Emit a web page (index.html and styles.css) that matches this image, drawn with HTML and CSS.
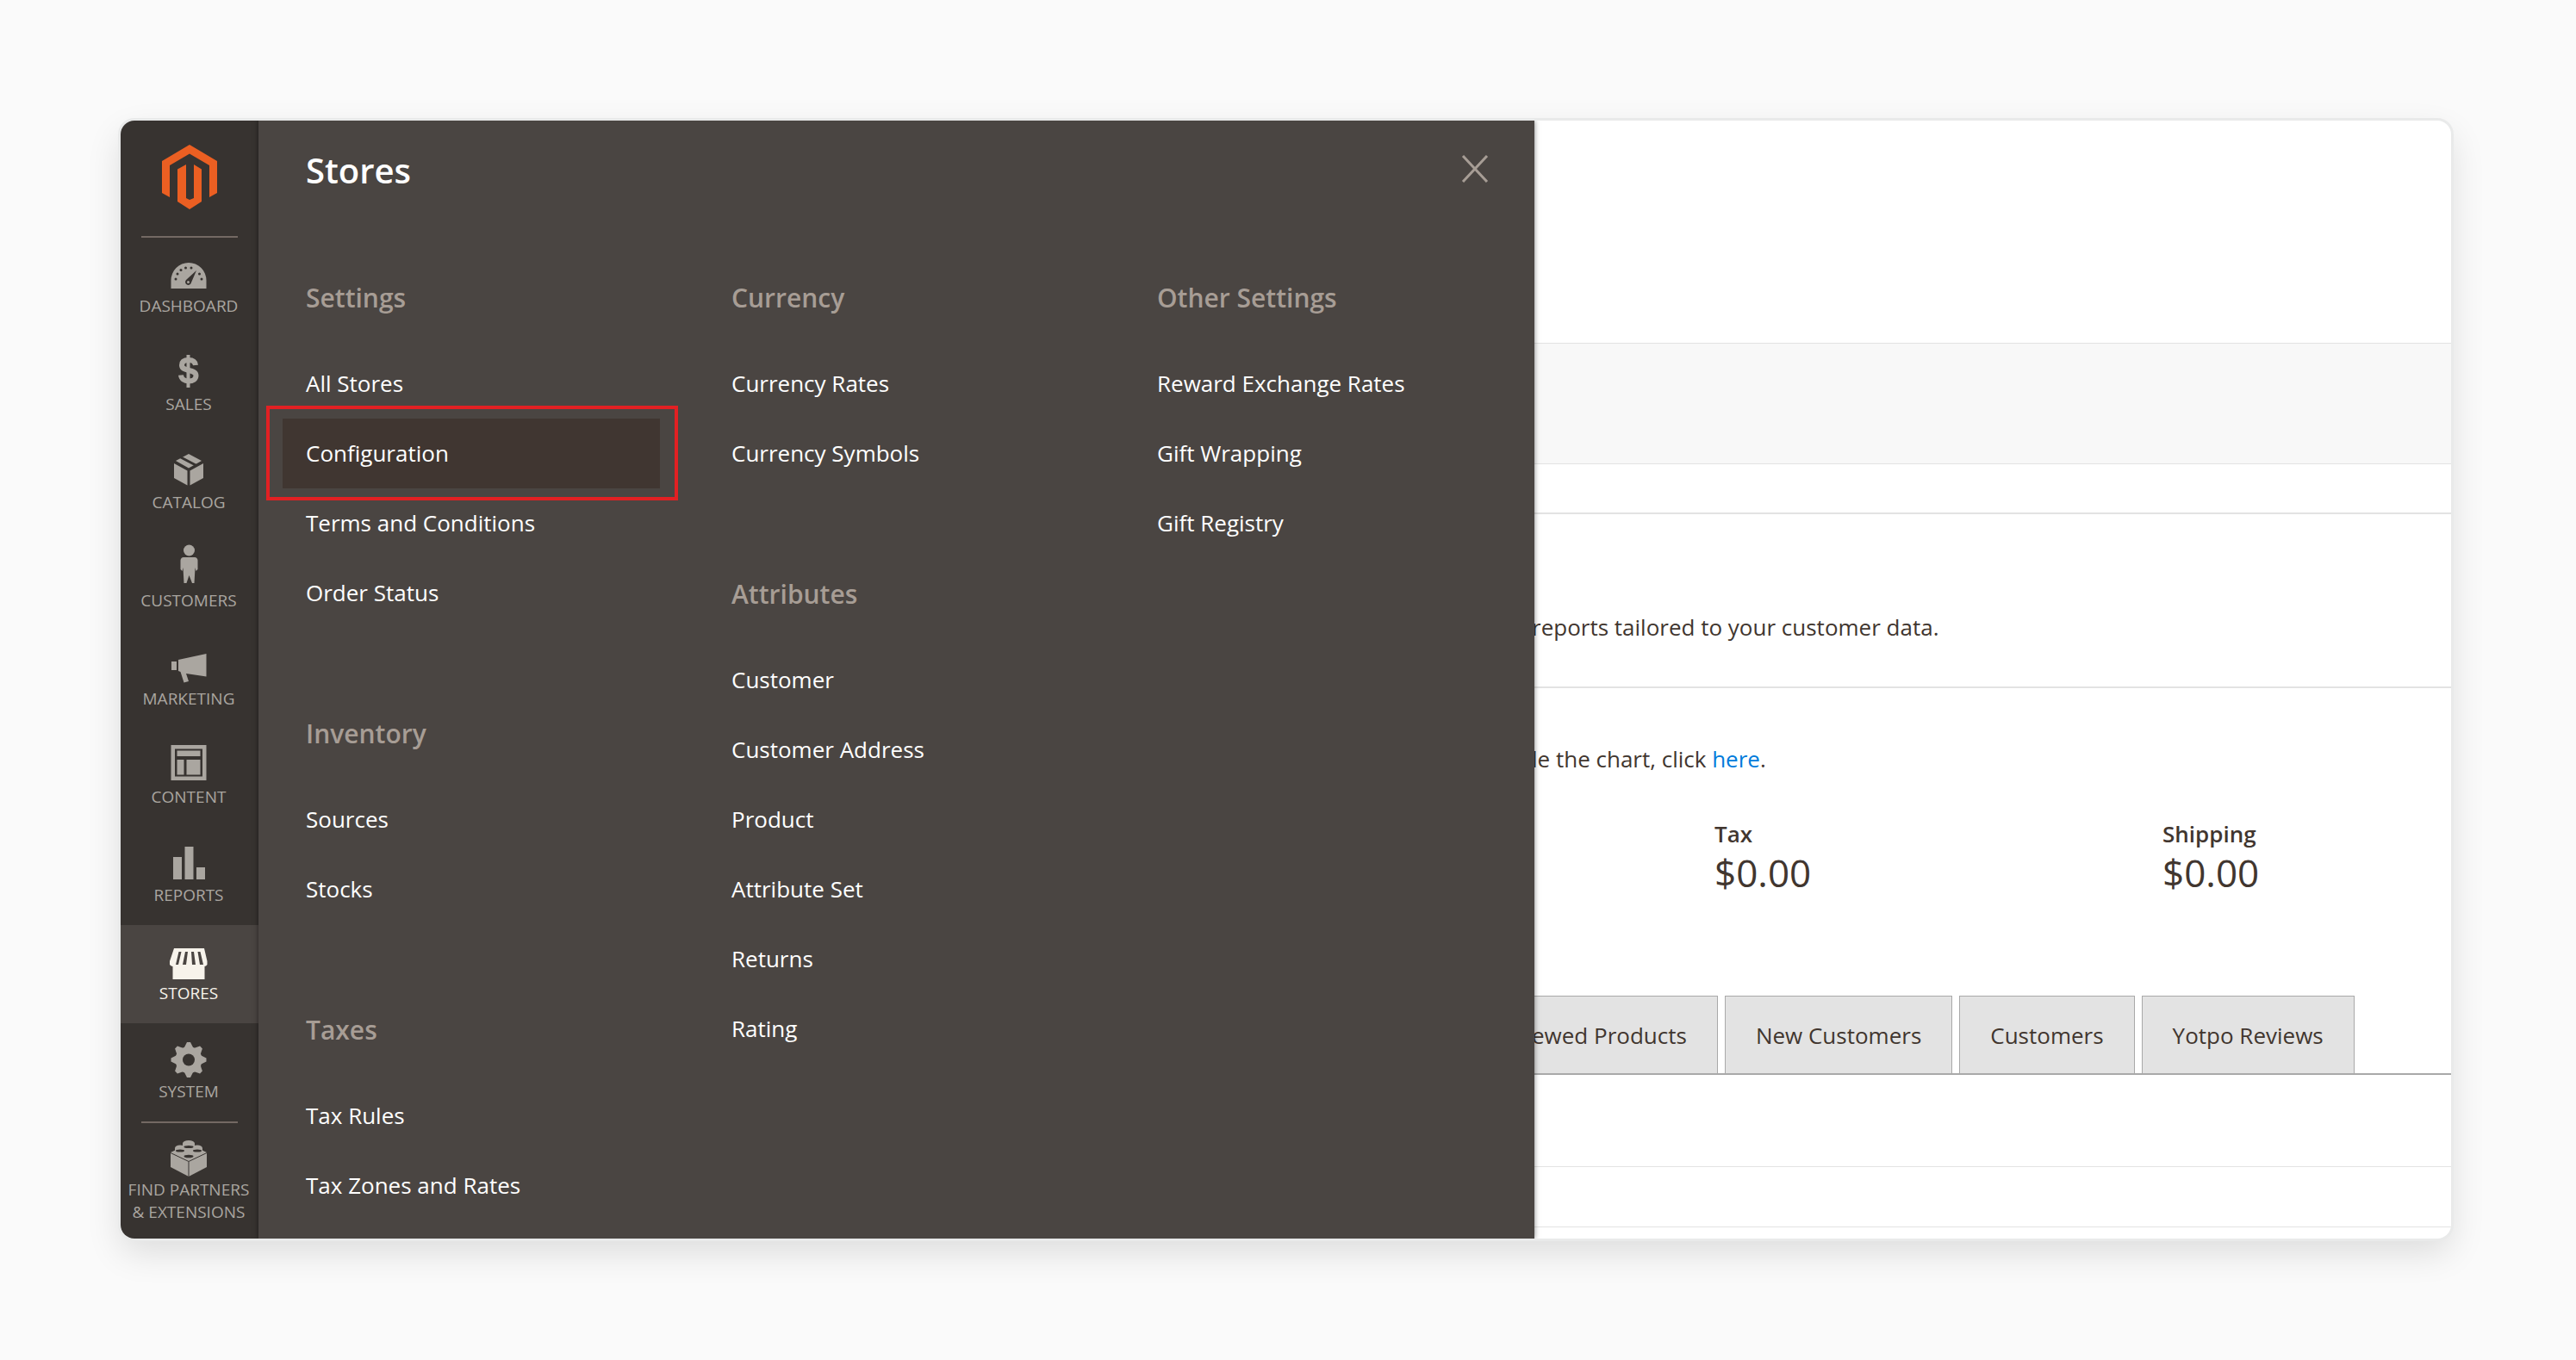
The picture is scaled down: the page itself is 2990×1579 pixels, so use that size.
FILE: index.html
```html
<!DOCTYPE html>
<html lang="en">
<head>
<meta charset="utf-8">
<title>Stores</title>
<link rel="stylesheet" href="styles.css">
</head>
<body>
<div class="window">
  <nav class="sidebar">
    <a class="logo" href="#">
      <svg width="64" height="76" viewBox="0 0 64 76"><path d="M32 0 64 19V56L55 61V24L32 10.500 9 24V61L0 56V19Z"/><path d="M28 23V62L32 64 37 62V23L46 28.500V66L32 75 18 66V28.500Z"/></svg>
    </a>
    <a class="item" href="#">
      <svg class="icon" viewBox="0 0 48 48"><path d="M3.500 43V33.500a20.500 20.500 0 0 1 41 0V43Z"/><g class="cut"><path d="M33 22 27 36a3.500 3.500 0 1 1-6-3Z"/><circle cx="9" cy="32" r="1.500"/><circle cx="11" cy="26" r="1.500"/><circle cx="15" cy="21.500" r="1.500"/><circle cx="20.500" cy="19" r="1.500"/><circle cx="27" cy="19" r="1.500"/><circle cx="36.500" cy="26" r="1.500"/><circle cx="39" cy="32" r="1.500"/></g><circle cx="23.500" cy="35.500" r="1.500"/></svg>
      <span>DASHBOARD</span>
    </a>
    <a class="item" href="#">
      <svg class="icon" viewBox="0 0 48 48"><path class="line dollar" d="M32 18c-.5-4-3.500-6-8-6-5 0-8 2-8 6 0 8 16.500 4 16.500 12 0 4-3.500 6.500-8.500 6.500s-8.500-2.500-9-7"/><path class="line thin" d="M23.500 6v38"/></svg>
      <span>SALES</span>
    </a>
    <a class="item" href="#">
      <svg class="icon" viewBox="0 0 48 48"><path d="M7 18 22.500 26.500V43.500L7 35ZM41 18 25.500 26.500V43.500L41 35ZM24 7 39 15 24 23.500 9 15Z"/><path class="gap" d="M14 10.500 33 20.500"/></svg>
      <span>CATALOG</span>
    </a>
    <a class="item" href="#">
      <svg class="icon" viewBox="0 0 48 48"><circle cx="24.500" cy="5" r="6.500"/><path d="M18 13h13q3 0 3.500 3.500V27l-2 2-1-4-1 18H28l-3.500-9-3 9h-3l-1-18-1 4-2-2V16.500Q15 13 18 13Z"/></svg>
      <span>CUSTOMERS</span>
    </a>
    <a class="item" href="#">
      <svg class="icon" viewBox="0 0 48 48"><path d="M4 20h6v10H4ZM12 18 44.500 11V37.500L21 34l3 9-5.500 1.500L14.500 32 12 31Z"/></svg>
      <span>MARKETING</span>
    </a>
    <a class="item" href="#">
      <svg class="icon" viewBox="0 0 48 48"><path fill-rule="evenodd" d="M3.500 3h41v41h-41ZM8 7.500v32h32v-32Z"/><path d="M10.500 9.500h27v6.500h-27ZM10.500 20h8v17.500h-8ZM21.500 20h16v17.500h-16Z"/></svg>
      <span>CONTENT</span>
    </a>
    <a class="item" href="#">
      <svg class="icon" viewBox="0 0 48 48"><path d="M6 19h10v26H6ZM19.500 7h10v38h-10ZM33 31h10v14H33Z"/></svg>
      <span>REPORTS</span>
    </a>
    <a class="item active" href="#">
      <svg class="icon" viewBox="0 0 48 48"><path d="M7 11h35l3.500 15v4q-1.500 2-3 2v15H5.500V32q-2 0-3.500-2v-4Z"/><g class="cut"><path d="M12.500 15h3L12 30H9ZM20 15h3L21 30h-4ZM27 15h3l2 15h-4ZM34.500 15h3L41 30h-4Z"/></g></svg>
      <span>STORES</span>
    </a>
    <a class="item" href="#">
      <svg class="icon" viewBox="0 0 48 48"><g><circle cx="24" cy="26.500" r="15.500"/><path id="tooth" d="M19 12 22 6h4L29 12v29l-3 6h-4L19 41Z"/><use href="#tooth" transform="rotate(45 24 26.500)"/><use href="#tooth" transform="rotate(90 24 26.500)"/><use href="#tooth" transform="rotate(135 24 26.500)"/></g><circle class="cut" cx="24" cy="26.500" r="7"/></svg>
      <span>SYSTEM</span>
    </a>
    <a class="item partners" href="#">
      <svg class="icon" viewBox="0 0 48 48"><path d="M3 20 24 10 45 20V37L24 48 3 37Z"/><path d="M17 9.500a7 3.500 0 0 1 14 0V15H17ZM8 15a6 3.500 0 0 1 12 0v4H8ZM28 15a6 3.500 0 0 1 12 0v4H28Z"/><g class="cut"><ellipse cx="24" cy="13.500" rx="5.500" ry="1.500"/><ellipse cx="14" cy="18" rx="5" ry="1.500"/><ellipse cx="34" cy="18" rx="5" ry="1.500"/><ellipse cx="24" cy="24.500" rx="5.500" ry="1.800"/></g><path class="seam" d="M3 20.500 24 30.500 45 20.500M24 31V48"/></svg>
      <span>FIND PARTNERS<br>&amp; EXTENSIONS</span>
    </a>
  </nav>

  <section class="flyout">
    <header class="flyout-head">
      <h1>Stores</h1>
      <button class="close" type="button" aria-label="Close"><svg width="32" height="32" viewBox="0 0 32 32"><path d="M2 1 30 31M30 1 2 31"/></svg></button>
    </header>
    <div class="columns">
      <div class="column">
        <div class="group">
          <h2>Settings</h2>
          <a href="#">All Stores</a>
          <a class="current" href="#">Configuration</a>
          <a href="#">Terms and Conditions</a>
          <a href="#">Order Status</a>
        </div>
        <div class="group">
          <h2>Inventory</h2>
          <a href="#">Sources</a>
          <a href="#">Stocks</a>
        </div>
        <div class="group">
          <h2>Taxes</h2>
          <a href="#">Tax Rules</a>
          <a href="#">Tax Zones and Rates</a>
        </div>
      </div>
      <div class="column">
        <div class="group">
          <h2>Currency</h2>
          <a href="#">Currency Rates</a>
          <a href="#">Currency Symbols</a>
        </div>
        <div class="group">
          <h2>Attributes</h2>
          <a href="#">Customer</a>
          <a href="#">Customer Address</a>
          <a href="#">Product</a>
          <a href="#">Attribute Set</a>
          <a href="#">Returns</a>
          <a href="#">Rating</a>
        </div>
      </div>
      <div class="column">
        <div class="group">
          <h2>Other Settings</h2>
          <a href="#">Reward Exchange Rates</a>
          <a href="#">Gift Wrapping</a>
          <a href="#">Gift Registry</a>
        </div>
      </div>
    </div>
  </section>

  <main class="page">
    <div class="toolbar"></div>
    <div class="spacer"></div>
    <p class="intro">reports tailored to your customer data.</p>
    <p class="note">le the chart, click <a href="#">here</a>.</p>
    <dl class="totals">
      <div><dt>Tax</dt><dd>$0.00</dd></div>
      <div><dt>Shipping</dt><dd>$0.00</dd></div>
    </dl>
    <div class="tabs">
      <button type="button">ewed Products</button>
      <button type="button">New Customers</button>
      <button type="button">Customers</button>
      <button type="button">Yotpo Reviews</button>
    </div>
    <div class="row first"></div>
    <div class="row"></div>
  </main>
</div>
</body>
</html>
```
FILE: styles.css
```css
* {
  box-sizing: border-box;
}

body {
  margin: 0;
  padding: 140px 145px 140px 140px;
  background: #fafafa;
  color: #41362f;
  font-family: "Open Sans", "Noto Sans", sans-serif;
  font-size: 26px;
}

a {
  color: inherit;
  text-decoration: none;
}

h1, h2, p, dl, dd {
  margin: 0;
}

.window {
  display: flex;
  overflow: hidden;
  border-radius: 16px;
  background: #fff;
  box-shadow: 0 0 0 3px #e9eaea, 0 16px 40px rgba(0, 0, 0, 0.12);
}

/* Sidebar */
.sidebar {
  flex: none;
  width: 160px;
  background: #373330;
  color: #aaa6a0;
  font-size: 19px;
  line-height: 26px;
  text-align: center;
}

.logo {
  display: flex;
  justify-content: center;
  height: 136px;
  margin: 0 24px;
  padding-top: 28px;
  border-bottom: 2px solid #736963;
}

.logo svg {
  fill: #eb5f22;
}

.item {
  display: flex;
  flex-direction: column;
  align-items: center;
  gap: 2px;
  height: 114px;
  padding: 16px 2px 0 0;
  white-space: nowrap;
}

.icon {
  flex: none;
  width: 48px;
  height: 48px;
  fill: currentColor;
  overflow: visible;
}

.icon .cut {
  fill: #373330;
}

.icon .line {
  fill: none;
  stroke: currentColor;
}

.icon .dollar {
  stroke-width: 6px;
}

.icon .thin {
  stroke-width: 4px;
}

.icon .gap {
  stroke: #373330;
  stroke-width: 3px;
}

.icon .seam {
  fill: none;
  stroke: #373330;
  stroke-width: 1px;
}

.active {
  background: #4a4542;
  color: #f7f3eb;
}

.active .cut {
  fill: #4a4542;
}

.partners {
  position: relative;
  height: 136px;
}

.partners::before {
  content: "";
  position: absolute;
  top: 0;
  left: 24px;
  right: 24px;
  border-top: 2px solid #736963;
}

/* Flyout menu */
.flyout {
  position: relative;
  z-index: 1;
  flex: none;
  width: 1481px;
  padding: 28px 53px 0 55px;
  background: #4a4542;
  box-shadow: 0 0 6px rgba(0, 0, 0, 0.5);
  color: #fff;
}

.flyout-head {
  display: flex;
  justify-content: space-between;
  margin-bottom: 88px;
}

h1 {
  font-size: 40px;
  font-weight: 600;
  line-height: 60px;
}

.close {
  width: 32px;
  height: 32px;
  margin-top: 12px;
  padding: 0;
  border: 0;
  background: none;
}

.close svg {
  display: block;
  fill: none;
  stroke: #a79d95;
  stroke-width: 3px;
}

.columns {
  display: grid;
  grid-template-columns: repeat(3, 438px);
  gap: 56px;
  margin: 0 -27px;
}

.column {
  display: flex;
  flex-direction: column;
  gap: 93px;
}

h2 {
  margin-bottom: 29px;
  padding: 0 27px;
  color: #a79d95;
  font-size: 30px;
  font-weight: 600;
  line-height: 60px;
}

.group a {
  display: block;
  padding: 0 27px;
  font-weight: 500;
  line-height: 81px;
  white-space: nowrap;
}

.group .current {
  position: relative;
  background: #403631;
}

.current::after {
  content: "";
  position: absolute;
  inset: -15px -21px -14px -19px;
  border: 4px solid #e22023;
}

/* Dashboard page */
.page {
  flex: 1;
  min-width: 0;
  margin-left: -3px;
  padding-top: 258px;
}

.toolbar {
  height: 141px;
  border: solid #e3e3e3;
  border-width: 1px 0;
  background: #f8f8f8;
}

.spacer {
  height: 58px;
  border-bottom: 2px solid #e3e3e3;
}

.intro {
  padding: 107px 0 45px;
  border-bottom: 2px solid #e3e3e3;
  line-height: 48px;
}

.note {
  padding-top: 58px;
  line-height: 48px;
}

.note a {
  color: #007bdb;
}

.totals {
  display: grid;
  grid-template-columns: 520px 1fr;
  padding: 43px 0 0 212px;
}

dt {
  font-weight: 600;
  line-height: 40px;
}

dd {
  font-size: 44px;
  line-height: 50px;
}

.tabs {
  display: flex;
  gap: 8px;
  margin-top: 118px;
  border-bottom: 2px solid #a9a9a9;
}

.tabs button {
  padding: 1px 35px 0;
  border: 1px solid #a9a9a9;
  border-bottom: 0;
  background: #e3e3e3;
  color: inherit;
  font: inherit;
  line-height: 88px;
}

.tabs button:first-child {
  padding-left: 0;
  border-left: 0;
}

.row {
  height: 70px;
  border-bottom: 1px solid #e3e3e3;
}

.row.first {
  height: 107px;
}
```
